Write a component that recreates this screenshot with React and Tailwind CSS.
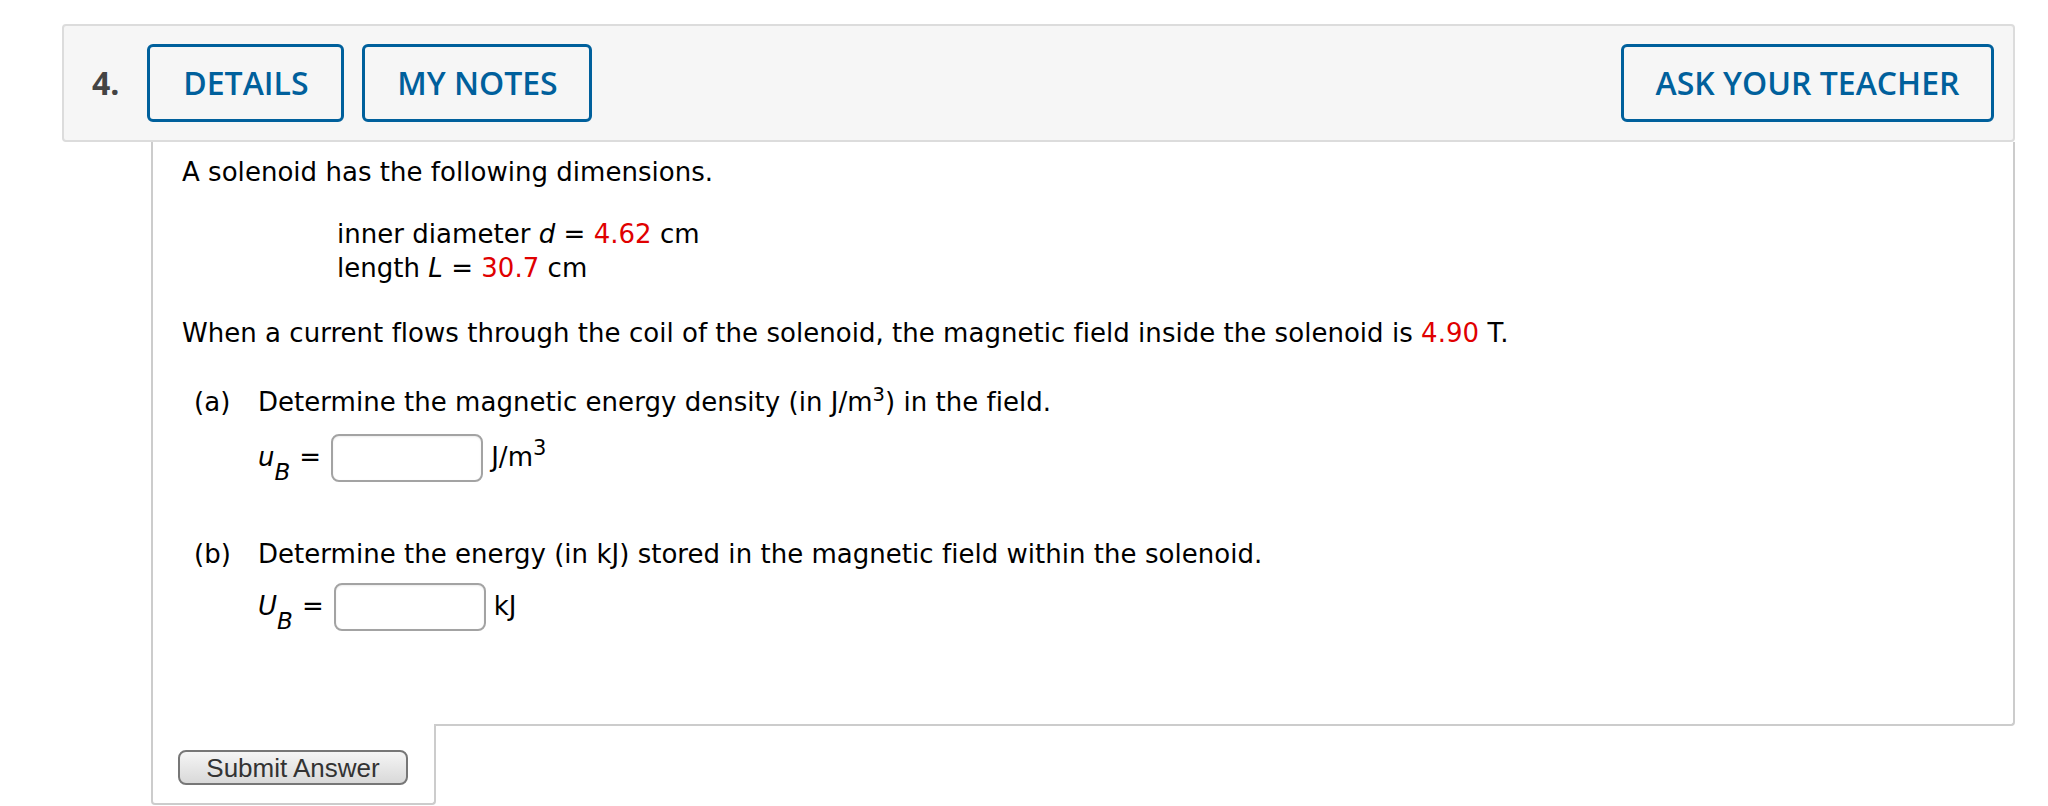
import React from "react";

const HeaderButton = ({ children, className = "" }) => (
  <button
    className={`h-[78px] rounded-[6px] border-[3px] border-[#00609c] bg-transparent font-['Open_Sans',sans-serif] text-[32px] font-semibold text-[#00609c] ${className}`}
  >
    {children}
  </button>
);

const Red = ({ children }) => <span className="text-[#e00000]">{children}</span>;

const AnswerBox = () => (
  <input
    type="text"
    className="ml-[10px] mr-[8px] h-[48px] w-[152px] rounded-[8px] border-2 border-[#a3a3a3] bg-white align-middle shadow-[inset_0_1px_2px_rgba(0,0,0,0.08)]"
  />
);

export default function App() {
  return (
    <div className="min-h-screen bg-white pl-[62px] pr-[33px] pt-[24px]">
      {/* Question header */}
      <div className="flex h-[118px] items-center rounded-[4px] border-2 border-[#dcdcdc] bg-[#f6f6f6] pl-[28px] pr-[19px]">
        <span className="font-['Open_Sans',sans-serif] text-[32px] font-bold text-[#444]">4.</span>
        <HeaderButton className="ml-[28px] w-[197px]">DETAILS</HeaderButton>
        <HeaderButton className="ml-[18px] w-[230px]">MY NOTES</HeaderButton>
        <HeaderButton className="ml-auto w-[373px]">ASK YOUR TEACHER</HeaderButton>
      </div>

      <div className="ml-[89px]">
        {/* Question body */}
        <div className="h-[584px] rounded-br-[4px] border-x-2 border-b-2 border-[#cccccc] pl-[29px] pt-[13px] font-['DejaVu_Sans',Verdana,sans-serif] text-[26px] leading-[34px] tracking-[0.03px] text-black [font-variant-ligatures:none]">
          <p>A solenoid has the following dimensions.</p>

          <div className="mt-[28px] pl-[155px]">
            <p>
              inner diameter <i>d</i> = <Red>4.62</Red> cm
            </p>
            <p>
              length <i>L</i> = <Red>30.7</Red> cm
            </p>
          </div>

          <p className="mt-[31px]">
            When a current flows through the coil of the solenoid, the magnetic field inside the solenoid is{" "}
            <Red>4.90</Red> T.
          </p>

          {/* Part a */}
          <div className="mt-[35px] flex pl-[12px]">
            <span className="w-[64px]">(a)</span>
            <span>
              Determine the magnetic energy density (in J/m<sup>3</sup>) in the field.
            </span>
          </div>
          <div className="mt-[15px] pl-[76px]">
            <i>u</i>
            <i className="relative top-[14px] text-[23px]">B</i>
            <span className="ml-[9px]">=</span>
            <AnswerBox />
            J/m<sup className="text-[21px]">3</sup>
          </div>

          {/* Part b */}
          <div className="mt-[55px] flex pl-[12px]">
            <span className="w-[64px]">(b)</span>
            <span>Determine the energy (in kJ) stored in the magnetic field within the solenoid.</span>
          </div>
          <div className="mt-[12px] pl-[76px]">
            <i>U</i>
            <i className="relative top-[14px] text-[23px]">B</i>
            <span className="ml-[9px]">=</span>
            <AnswerBox />
            kJ
          </div>
        </div>

        {/* Submit tab */}
        <div className="-mt-[2px] h-[81px] w-[285px] rounded-b-[4px] border-x-2 border-b-2 border-[#cccccc] bg-white pl-[25px] pt-[26px]">
          <button className="h-[35px] w-[230px] rounded-[8px] border-2 border-[#777] bg-linear-to-b from-[#f5f5f5] to-[#d9d9d9] font-['Liberation_Sans',Arial,sans-serif] text-[26px] leading-none text-[#333]">
            Submit Answer
          </button>
        </div>
      </div>
    </div>
  );
}
